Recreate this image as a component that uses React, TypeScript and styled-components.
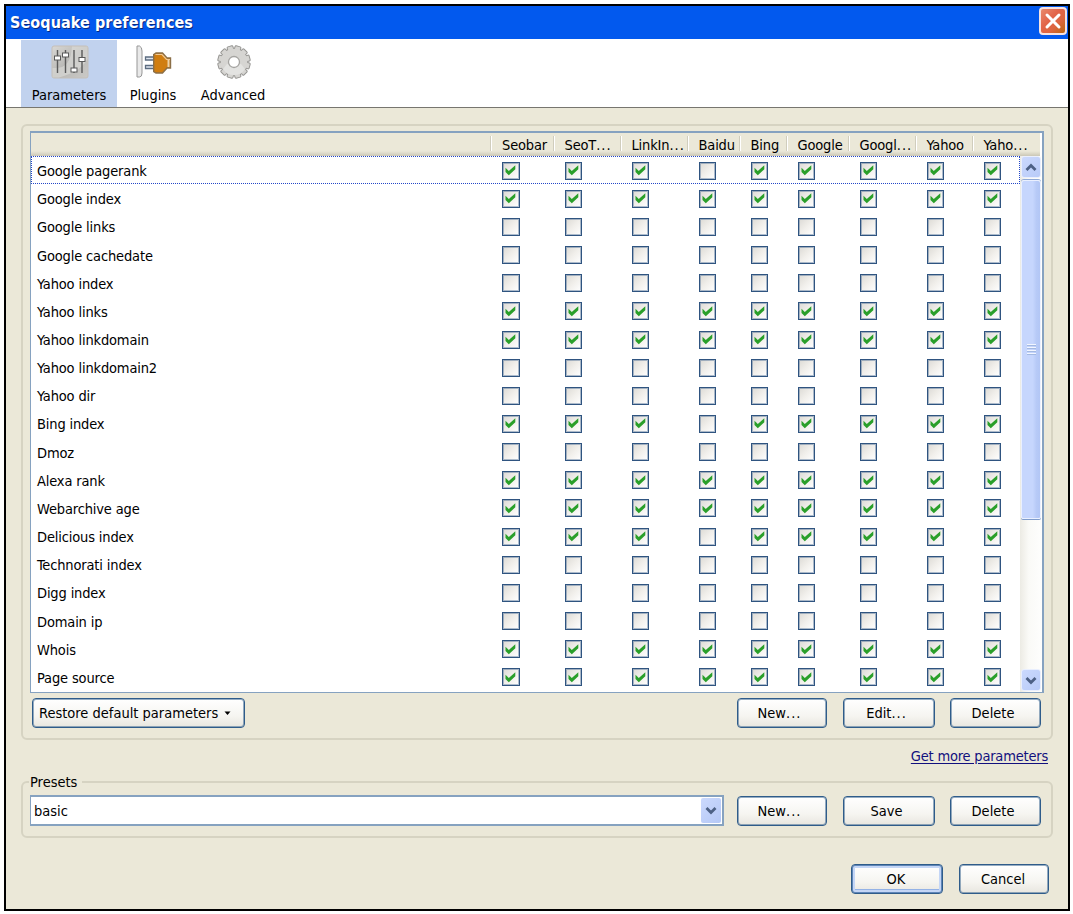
import React from "react";
import styled, { createGlobalStyle, css } from "styled-components";

const Global = createGlobalStyle`
  * { box-sizing: border-box; }
  html, body { margin: 0; background: #fff; }
  body {
    font-family: "DejaVu Sans Condensed", "DejaVu Sans", sans-serif;
    font-stretch: condensed;
    font-size: 14.5px;
    line-height: 18px;
    color: #000;
    overflow: hidden;
  }
`;

const Label = styled.span<{ $track?: number }>`
  white-space: nowrap;
  letter-spacing: ${(p) => p.$track ?? 0}px;
`;

const Dots = styled.span`
  letter-spacing: 1px;
`;

const Window = styled.div`
  width: 1066px;
  height: 907px;
  margin: 4px 0 0 4px;
  border: 2px solid #000;
  background: #ebe8d8;
  display: flex;
  flex-direction: column;
`;

const TitleBar = styled.header`
  height: 33px;
  flex: none;
  display: flex;
  align-items: center;
  justify-content: space-between;
  padding: 0 1px 0 4px;
  background: #0259ee;
  color: #fff;
  font-weight: bold;
  font-size: 16px;
  text-shadow: 1px 1px 0 #0a2a80;
`;

const CloseButton = styled.button`
  width: 28px;
  height: 28px;
  margin-top: -3px;
  padding: 0;
  border: 2px solid #f6e3e2;
  border-radius: 4px;
  background: linear-gradient(135deg, #e98a6d 0%, #e2654a 40%, #dd6540 65%, #b8660f 100%);
  display: flex;
  align-items: center;
  justify-content: center;
`;

const Toolbar = styled.nav`
  height: 69px;
  flex: none;
  display: flex;
  padding: 1px 0 0 15px;
  background: #fff;
  border-bottom: 1px solid #77766f;
`;

const Tab = styled.button<{ $width: number; $active?: boolean }>`
  width: ${(p) => p.$width}px;
  height: 67px;
  padding: 5px 0 0;
  border: 0;
  font: inherit;
  color: #000;
  background: ${(p) => (p.$active ? "#c1d2ee" : "transparent")};
  display: flex;
  flex-direction: column;
  align-items: center;
  gap: 7px;

  svg {
    margin-left: 2px;
  }
`;

const Content = styled.main`
  flex: 1;
  display: flex;
  flex-direction: column;
  padding: 16px 15px 0;
`;

const frame = css`
  border: 2px solid #d6d3c2;
  border-radius: 6px;
`;

const ParameterGroup = styled.section`
  ${frame}
  width: 1032px;
  height: 616px;
  flex: none;
  padding: 5px 7px 0;
`;

const Tree = styled.div`
  width: 1014px;
  height: 562px;
  border: 2px solid #86a2c0;
  border-left-width: 1px;
  border-bottom-width: 1px;
  background: #fff;
  display: flex;
  flex-direction: column;
`;

const HeaderRow = styled.div`
  display: flex;
  height: 23px;
  flex: none;
  width: 1009px;
  background: linear-gradient(#ebe8d8 0 18px, #dfdccb 20px, #cbc7b6 23px);
`;

const HeaderCell = styled.div<{ $width: number }>`
  width: ${(p) => p.$width}px;
  flex: none;
  height: 19px;
  padding: 3px 0 0 12px;
  background: linear-gradient(90deg, #d0cdbd 0 1px, #fff 1px 2px) no-repeat 0 3px / 2px 15px;
  &:first-child { background: none; }
`;

const TreeBody = styled.div`
  flex: 1;
  display: flex;
`;

const Rows = styled.div`
  width: 989px;
  flex: none;
  display: flex;
  flex-direction: column;
`;

const Row = styled.div<{ $focused?: boolean }>`
  height: 28.16px;
  flex: none;
  display: flex;
  align-items: center;
  outline: ${(p) => (p.$focused ? "1px dotted #2347c8" : "none")};
  outline-offset: -1px;
`;

const NameCell = styled.div`
  width: 459px;
  flex: none;
  padding: 2px 0 0 6px;
`;

const CheckCell = styled.div<{ $width: number }>`
  width: ${(p) => p.$width}px;
  flex: none;
  padding: 1px 0 0 12px;
`;

const CheckBox = styled.div`
  width: 17.5px;
  height: 18px;
  border: 1px solid #2f5480;
  box-shadow: inset 0 0 0 1px rgba(58, 96, 140, 0.4);
  background: linear-gradient(135deg, #dcdad5 0%, #f1efeb 50%, #fff 100%);
  display: flex;
  align-items: center;
  justify-content: center;
`;

const ScrollBar = styled.div`
  width: 22px;
  display: flex;
  flex-direction: column;
  align-items: center;
  padding-bottom: 1px;
  background: linear-gradient(90deg, #ecebe4, #fafaf7 40%, #fefefd);
`;

const ScrollButton = styled.button`
  width: 20px;
  height: 22px;
  flex: none;
  padding: 0;
  border: 1px solid #e9effe;
  border-radius: 3px;
  background: linear-gradient(135deg, #cbd9fd, #b8cbf8);
  display: flex;
  align-items: center;
  justify-content: center;
`;

const Thumb = styled.div`
  width: 20px;
  height: 339px;
  flex: none;
  margin-top: 2px;
  border: 1px solid #eaf0ff;
  border-radius: 3px 3px 2px 2px;
  background: linear-gradient(90deg, #c6d6fd 0 60%, #b7caf7 80%, #b2c6f5);
  box-shadow: 0 -1px 0 #8fa9d6, 0 1px 0 #7f9ccb;
  display: flex;
  flex-direction: column;
  align-items: center;
  justify-content: center;
`;

const Grip = styled.div`
  width: 9px;
  height: 11px;
  background: repeating-linear-gradient(#f2f6ff 0 1px, #a3b9e2 1px 2px, transparent 2px 3px);
`;

const Filler = styled.div`
  flex: 1;
`;

const ButtonRow = styled.div`
  display: flex;
  align-items: center;
`;

const ParameterActions = styled(ButtonRow)`
  padding: 5px 0 0 2px;
`;

const Button = styled.button<{ $width: number; $gap?: number; $default?: boolean }>`
  width: ${(p) => p.$width}px;
  height: 30px;
  flex: none;
  margin-left: ${(p) => p.$gap ?? 0}px;
  padding: 0 5px 0 0;
  border: 1px solid #2f5c8a;
  border-radius: 4px;
  background: linear-gradient(#fff, #f6f5f1 60%, #e8e6df);
  box-shadow: ${(p) =>
    p.$default
      ? "inset 0 0 0 1px #5f86b8, inset 0 0 0 3px #c4d6f6, inset 0 -4px 0 #94b2e6"
      : "inset 0 0 0 1px rgba(63, 106, 146, 0.55)"};
  font: inherit;
  color: #000;
  display: flex;
  align-items: center;
  justify-content: center;
`;

const MenuButton = styled(Button)`
  justify-content: flex-start;
  padding-left: 6px;
  gap: 6px;
`;

const DialogButton = styled(Button)`
  padding-right: 2px;
`;

const LinkRow = styled.div`
  display: flex;
  justify-content: flex-end;
  height: 40px;
  padding: 7px 5px 0 0;
`;

const Link = styled.a`
  color: #12107e;
  height: 18px;
  text-decoration: underline;
  text-underline-offset: 2px;
`;

const PresetGroup = styled.fieldset`
  ${frame}
  width: 1032px;
  height: 65px;
  flex: none;
  margin: -7px 0 0;
  padding: 4px 7px 0;
`;

const Legend = styled.legend`
  height: 18px;
  padding: 0 5px 0 1px;
  margin-left: -1px;
`;

const Combo = styled.div`
  width: 694px;
  height: 31px;
  border: 2px solid #86a2c0;
  border-left-width: 1px;
  background: #fff;
  display: flex;
  align-items: center;
  justify-content: space-between;
  padding: 0 1px 0 3px;
`;

const ComboArrow = styled.div`
  width: 20px;
  height: 25px;
  border-radius: 2px;
  background: linear-gradient(135deg, #cbd9fd, #b5c8f6);
  display: flex;
  align-items: center;
  justify-content: center;
`;

const Footer = styled(ButtonRow)`
  justify-content: flex-end;
  padding: 26px 4px 0 0;
`;

const SlidersIcon = () => (
  <svg width="38" height="34" viewBox="0 0 38 34">
    <defs>
      <linearGradient id="panel" x1="0" y1="0" x2="1" y2="1">
        <stop offset="0" stopColor="#d9d8d5" />
        <stop offset=".5" stopColor="#b9b8b5" />
        <stop offset="1" stopColor="#cbcac7" />
      </linearGradient>
    </defs>
    <rect x="1" y="1" width="36" height="32" rx="2" fill="url(#panel)" stroke="#c5bfb8" />
    <path d="M1.500 23C14 24 20 18 21 1.500H36.500V14C30 26 16 30 8 32.500H1.500Z" fill="#dedddb" opacity=".6" />
    <path d="M6.500 5V28M14.500 5V28M23 5V28M31 5V28" stroke="#5a5a5a" strokeWidth="1.400" />
    <g fill="#fff" stroke="#5a5a5a">
      <rect x="3.500" y="11" width="6" height="4" />
      <rect x="11.500" y="8" width="6" height="4" />
      <rect x="20" y="23" width="6" height="4" />
      <rect x="28" y="12.500" width="6" height="4" />
    </g>
  </svg>
);

const PlugIcon = () => (
  <svg width="36" height="34" viewBox="0 0 36 34">
    <path d="M1 1H3.500Q6 2 6 6V28Q6 32 3.500 32H1Z" fill="#e9e9e9" stroke="#979797" />
    <path d="M9.500 12H18V15H9.500ZM9.500 20.500H18V23.500H9.500Z" fill="#dfe6f0" stroke="#5c6c80" strokeWidth="1.300" />
    <path d="M17.700 9.500L20 8H26.500L31 13H34.500V23H31L26.500 28H20L17.700 26.500Z" fill="#d07d10" stroke="#8b6f48" strokeWidth="1.400" />
    <path d="M19.500 9.500H26L30.500 14.500H34" fill="none" stroke="#f0c894" strokeWidth="1.200" />
    <path d="M32.500 15V22" stroke="#ecd2a8" strokeWidth="2" />
  </svg>
);

const GearIcon = () => (
  <svg width="36" height="34" viewBox="-18 -17 36 34">
    <g fill="#d6d5d2" stroke="#969592" strokeWidth="1">
      {Array.from({ length: 12 }, (_, i) => (
        <rect key={i} x="-3" y="-16.200" width="6" height="6" rx="1" transform={`rotate(${i * 30 + 15})`} />
      ))}
    </g>
    <circle r="13.300" fill="#d6d5d2" />
    <path d="M-11 7A13 13 0 0 0 11 7L7 2H-7Z" fill="#e3e3e1" />
    <circle r="5.500" fill="#fff" stroke="#a5a4a1" strokeWidth="1.300" />
  </svg>
);

const CloseIcon = () => (
  <svg width="18" height="18" viewBox="0 0 18 18">
    <path d="M3 3L15 15M15 3L3 15" stroke="#fff" strokeWidth="3" strokeLinecap="round" />
  </svg>
);

const Chevron = ({ up = false }: { up?: boolean }) => (
  <svg width="12" height="9" viewBox="0 0 12 9">
    <path d={up ? "M1.500 7L6 2.500L10.500 7" : "M1.500 2L6 6.500L10.500 2"} fill="none" stroke="#4d6185" strokeWidth="2.800" />
  </svg>
);

const Tick = () => (
  <svg width="11" height="11" viewBox="0 0 11 11">
    <path d="M.5 2.800L3.800 6L10.300 .3V4.300L3.800 10.300L.5 7Z" fill="#2a9f2a" />
  </svg>
);

const Caret = () => (
  <svg width="7" height="5" viewBox="0 0 7 5">
    <path d="M.5.500H6.500L3.500 4Z" fill="#000" />
  </svg>
);

const columns = [
  { title: "Seobar", width: 62.5 },
  { title: "SeoT", clipped: true, width: 67 },
  { title: "LinkIn", clipped: true, width: 67 },
  { title: "Baidu", width: 52 },
  { title: "Bing", width: 47 },
  { title: "Google", width: 62 },
  { title: "Googl", clipped: true, width: 67 },
  { title: "Yahoo", width: 57 },
  { title: "Yaho", clipped: true, width: 66 },
];

const ALL = "111111111";
const NONE = "000000000";
const NO_BAIDU = "111011111";

const parameters: [string, string][] = [
  ["Google pagerank", NO_BAIDU],
  ["Google index", ALL],
  ["Google links", NONE],
  ["Google cachedate", NONE],
  ["Yahoo index", NONE],
  ["Yahoo links", ALL],
  ["Yahoo linkdomain", ALL],
  ["Yahoo linkdomain2", NONE],
  ["Yahoo dir", NONE],
  ["Bing index", NO_BAIDU],
  ["Dmoz", NONE],
  ["Alexa rank", ALL],
  ["Webarchive age", ALL],
  ["Delicious index", NO_BAIDU],
  ["Technorati index", NONE],
  ["Digg index", NONE],
  ["Domain ip", NONE],
  ["Whois", ALL],
  ["Page source", ALL],
];

export default function App() {
  return (
    <>
      <Global />
      <Window>
        <TitleBar>
          <Label $track={0.08}>Seoquake preferences</Label>
          <CloseButton aria-label="Close"><CloseIcon /></CloseButton>
        </TitleBar>
        <Toolbar>
          <Tab $width={96} $active><SlidersIcon /><Label>Parameters</Label></Tab>
          <Tab $width={72}><PlugIcon /><Label>Plugins</Label></Tab>
          <Tab $width={88}><GearIcon /><Label>Advanced</Label></Tab>
        </Toolbar>
        <Content>
          <ParameterGroup>
            <Tree>
              <HeaderRow>
                <HeaderCell $width={459} />
                {columns.map((c) => (
                  <HeaderCell key={c.title} $width={c.width}>
                    <Label $track={-0.15}>{c.title}{c.clipped && <Dots>...</Dots>}</Label>
                  </HeaderCell>
                ))}
              </HeaderRow>
              <TreeBody>
                <Rows>
                  {parameters.map(([name, checks], i) => (
                    <Row key={name} $focused={i === 0}>
                      <NameCell><Label $track={-0.15}>{name}</Label></NameCell>
                      {columns.map((c, j) => (
                        <CheckCell key={c.title} $width={j === 8 ? 45 : c.width}>
                          <CheckBox>{checks[j] === "1" && <Tick />}</CheckBox>
                        </CheckCell>
                      ))}
                    </Row>
                  ))}
                </Rows>
                <ScrollBar>
                  <ScrollButton aria-label="Scroll up"><Chevron up /></ScrollButton>
                  <Thumb><Grip /></Thumb>
                  <Filler />
                  <ScrollButton aria-label="Scroll down"><Chevron /></ScrollButton>
                </ScrollBar>
              </TreeBody>
            </Tree>
            <ParameterActions>
              <MenuButton $width={213}><Label>Restore default parameters</Label><Caret /></MenuButton>
              <Button $width={90} $gap={492}><Label>New<Dots>...</Dots></Label></Button>
              <Button $width={92} $gap={16}><Label>Edit<Dots>...</Dots></Label></Button>
              <Button $width={91} $gap={15}><Label>Delete</Label></Button>
            </ParameterActions>
          </ParameterGroup>
          <LinkRow><Link><Label $track={-0.2}>Get more parameters</Label></Link></LinkRow>
          <PresetGroup>
            <Legend><Label>Presets</Label></Legend>
            <ButtonRow>
              <Combo><Label>basic</Label><ComboArrow><Chevron /></ComboArrow></Combo>
              <Button $width={90} $gap={13}><Label>New<Dots>...</Dots></Label></Button>
              <Button $width={92} $gap={16}><Label>Save</Label></Button>
              <Button $width={91} $gap={15}><Label>Delete</Label></Button>
            </ButtonRow>
          </PresetGroup>
          <Footer>
            <DialogButton $width={92} $default><Label>OK</Label></DialogButton>
            <DialogButton $width={90} $gap={16}><Label>Cancel</Label></DialogButton>
          </Footer>
        </Content>
      </Window>
    </>
  );
}
